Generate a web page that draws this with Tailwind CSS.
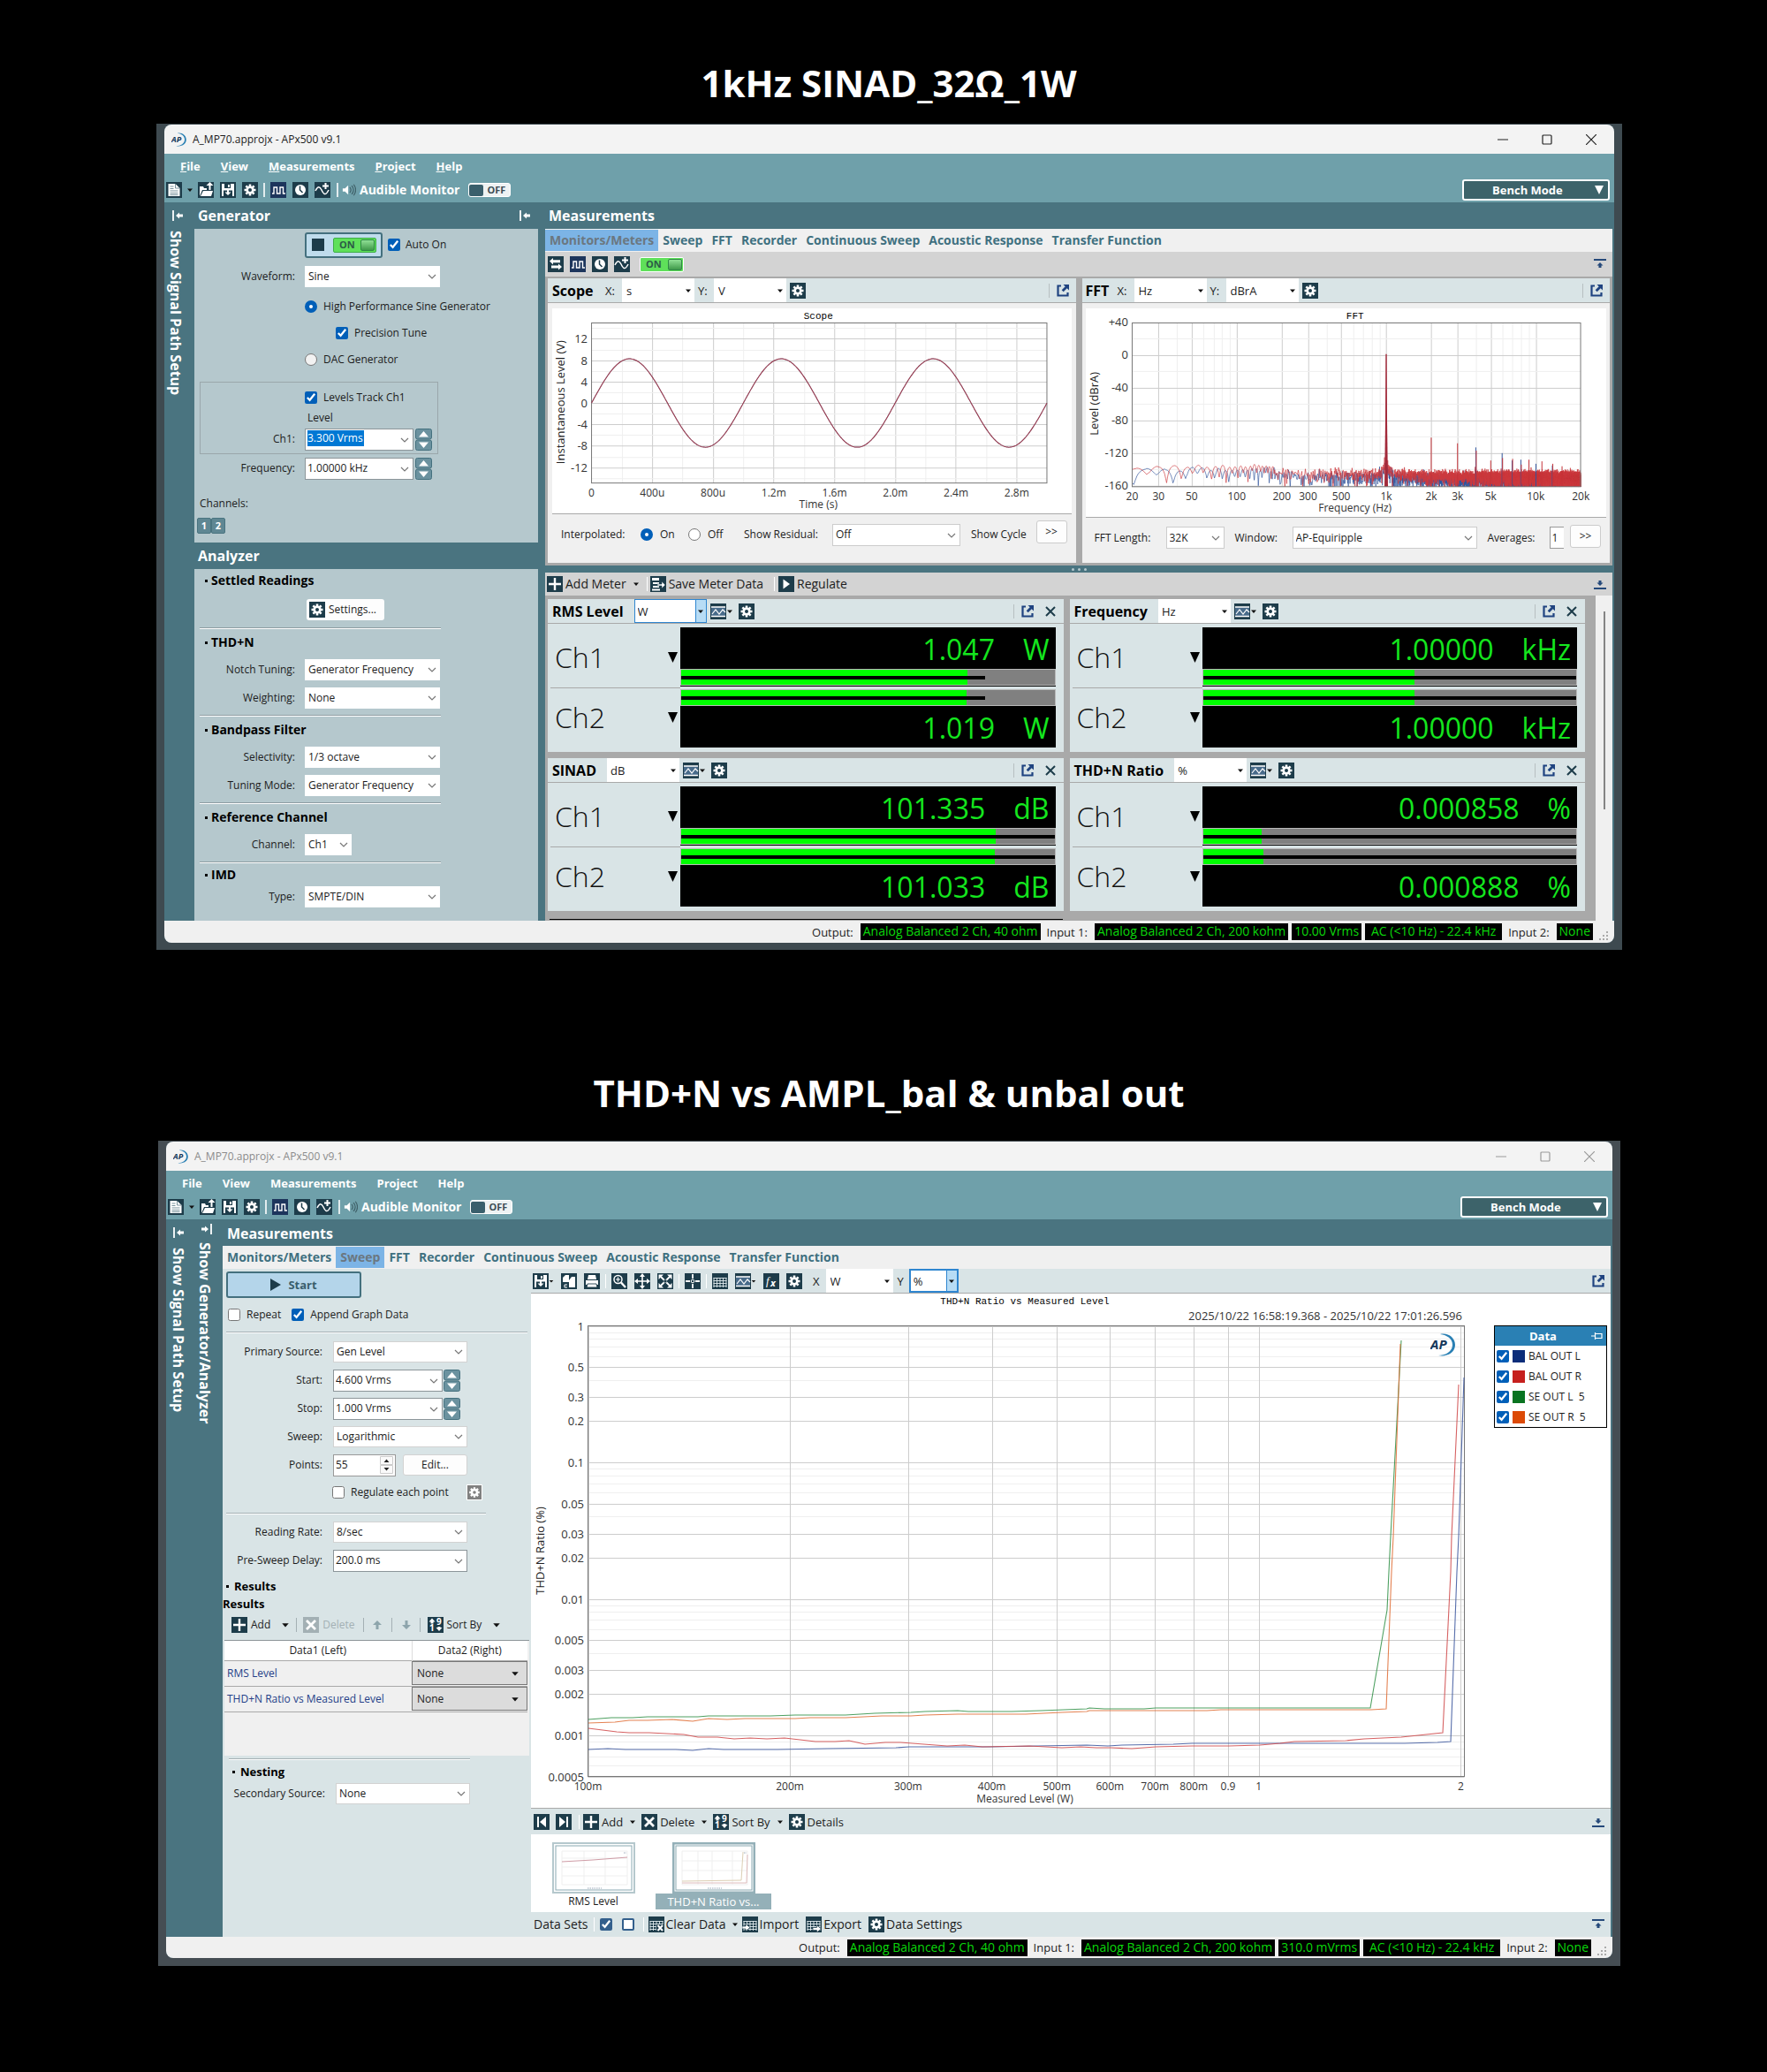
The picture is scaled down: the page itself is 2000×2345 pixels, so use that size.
<!DOCTYPE html>
<html lang="en">
  <head>
    <meta charset="UTF-8" />
    <meta name="viewport" content="width=device-width, initial-scale=1" />
    <title>APx500 - MP70 measurements</title>
    <script src="https://cdn.jsdelivr.net/npm/@tailwindcss/browser@4"></script>
  </head>

  <body class="bg-black font-['Open_Sans','Noto_Sans',sans-serif] text-[12px] leading-4 text-[#1c1c1c] [&_svg]:block [&_svg]:shrink-0 [&_select]:appearance-none [&_select]:outline-none [&_select]:w-full [&_select]:h-full [&_input]:outline-none">

    <!-- icon set -->
    <svg hidden width="0" height="0" aria-hidden="true">
      <symbol id="chev" viewBox="0 0 10 10"><path d="M1 3l4 4 4-4" fill="none" stroke="#777" stroke-width="1.2" /></symbol>
      <symbol id="tri" viewBox="0 0 8 8"><path d="M1 2.500h6L4 6z" fill="#111" /></symbol>
      <symbol id="ap" viewBox="0 0 30 30">
        <text x="0" y="20" font-size="15" font-weight="700" font-style="italic" fill="#14375a">AP</text>
        <path d="M11 3c9-2 17 4 17 12s-8 14-19 12c9 0 16-5 16-12S19 4 11 3z" fill="#2a80b4" />
      </symbol>
      <symbol id="gear" viewBox="0 0 18 18">
        <rect width="18" height="18" fill="currentColor" />
        <g stroke="#fff" stroke-width="2.600"><path d="M9 2.500v13M2.500 9h13M4.400 4.400l9.200 9.200M13.600 4.400l-9.200 9.200" /></g>
        <circle cx="9" cy="9" r="4.600" fill="#fff" /><circle cx="9" cy="9" r="2" fill="currentColor" />
      </symbol>
      <symbol id="new" viewBox="0 0 18 18">
        <rect width="18" height="18" fill="#1d3c4a" /><path d="M2.500 2h8l5 5v9h-13z" fill="#fff" />
        <path d="M10.500 2v5h5M4.500 5h4M4.500 7.500h4M4.500 10h9M4.500 12.500h9M4.500 14.500h9" stroke="#6a8791" fill="none" stroke-width=".9" />
      </symbol>
      <symbol id="open" viewBox="0 0 18 18">
        <rect width="18" height="18" fill="#1d3c4a" /><path d="M2 16V5h4l1 2h3v2H5z" fill="#fff" /><path d="M3 16l3-6h11l-2 6z" fill="#fff" />
        <path d="M12.500 9V4h-3l4-4 4 4h-3v5z" fill="#fff" />
      </symbol>
      <symbol id="save" viewBox="0 0 18 18">
        <rect width="18" height="18" fill="#1d3c4a" /><path d="M2 2h14v14H2z" fill="#fff" /><path d="M5 2h7v5H5z" fill="#1d3c4a" /><path d="M9 3h2v3H9z" fill="#fff" />
        <path d="M4 9.500h10V16H4z" fill="#1d3c4a" /><path d="M8 8.500h2v3h2.500L9 15l-3.500-3.500H8z" fill="#fff" />
      </symbol>
      <symbol id="wave" viewBox="0 0 18 18"><rect width="18" height="18" fill="#1d355c" /><path d="M2 13h2V6h3.500v7H11V6h3.500v7H17" fill="none" stroke="#fff" stroke-width="1.400" /></symbol>
      <symbol id="clock" viewBox="0 0 18 18"><rect width="18" height="18" fill="#1d3c4a" /><circle cx="9" cy="9" r="6" fill="#fff" /><path d="M8.500 4.500V9l3 3" fill="none" stroke="#1d3c4a" stroke-width="1.500" /></symbol>
      <symbol id="sine" viewBox="0 0 18 18"><rect width="18" height="18" fill="#1d3c4a" /><path d="M1 10c3-6 5-5 7-1s4 8 8 0" fill="none" stroke="#fff" stroke-width="1.500" /><path d="M12.500 1v7M9 4.500h7" stroke="#fff" stroke-width="2" /></symbol>
      <symbol id="speaker" viewBox="0 0 18 18"><path d="M1 7h3l4-4v12l-4-4H1z" fill="#fff" /><path d="M10 5.500q3 3.500 0 7M12.500 3.500q4.500 5.500 0 11M15 2q5 7 0 14" fill="none" stroke="#3f6068" stroke-width="1.300" /></symbol>
      <symbol id="collapse" viewBox="0 0 14 14"><path d="M2 1v12" stroke="#fff" stroke-width="1.800" /><path d="M5 7l4-3.500v2h4v3H9v2z" fill="#fff" /></symbol>
      <symbol id="swap" viewBox="0 0 18 18"><rect width="18" height="18" fill="#1d3c4a" /><path d="M2 5.500L6 2v2.200h8v3H6v2.300zM16 12l-4 3.500V13.500H4v-3h8V8.500z" fill="#fff" /></symbol>
      <symbol id="popout" viewBox="0 0 16 16"><path d="M6 2.500H2.500v11h11V10" fill="none" stroke="#1f4380" stroke-width="2.200" /><path d="M8.500 1H15v6.500l-2.300-2.300-4 4-2-2 4-4z" fill="#1f4380" /></symbol>
      <symbol id="close" viewBox="0 0 14 14"><path d="M2 2l10 10M12 2L2 12" stroke="#1d3c4a" stroke-width="2" /></symbol>
      <symbol id="trace" viewBox="0 0 18 18"><rect width="18" height="18" fill="#1d3c4a" /><path d="M1 4h16v11H1z" fill="#486b8a" /><path d="M1 4h16M1 14.500h16" stroke="#fff" stroke-width="1.400" /><path d="M2 12l4-5 4 5 4-5 3 3" fill="none" stroke="#fff" stroke-width="1.200" /></symbol>
      <symbol id="plus" viewBox="0 0 18 18"><rect width="18" height="18" fill="#1d3c4a" /><path d="M9 2v14M2 9h14" stroke="#fff" stroke-width="2.400" /></symbol>
      <symbol id="del" viewBox="0 0 18 18"><rect width="18" height="18" fill="currentColor" /><path d="M4 4l10 10M14 4L4 14" stroke="#fff" stroke-width="2.800" /></symbol>
      <symbol id="savedata" viewBox="0 0 18 18"><rect width="18" height="18" fill="#1d3c4a" /><path d="M2 2h8v3H2zM3 7h7v2H3zM3 11h7v2H3zM2 14.500h9v2H2z" fill="#fff" /><path d="M8 9h5V6l4 4-4 4v-3H8z" fill="#fff" stroke="#1d3c4a" stroke-width=".6" /></symbol>
      <symbol id="play" viewBox="0 0 18 18"><rect width="18" height="18" fill="#1d3c4a" /><path d="M5.500 3.500L13 9l-7.500 5.500z" fill="#fff" /></symbol>
      <symbol id="up" viewBox="0 0 16 16"><path d="M1 3h14" stroke="#25497a" stroke-width="2" /><path d="M8 6l3.500 3.500H9.500V12h-3V9.500h-2z" fill="#25497a" /></symbol>
      <symbol id="down" viewBox="0 0 16 16"><path d="M1 13h14" stroke="#25497a" stroke-width="2" /><path d="M8 10l3.500-3.500H9.500V4h-3v2.500h-2z" fill="#25497a" /></symbol>
      <symbol id="copy" viewBox="0 0 18 18"><rect width="18" height="18" fill="#1d3c4a" /><path d="M2 5l3-3h4v8H2z" fill="#fff" /><path d="M9 8l3-4h4v12H9z" fill="#fff" /><path d="M7 13H4v3h3" fill="none" stroke="#fff" /></symbol>
      <symbol id="print" viewBox="0 0 18 18"><rect width="18" height="18" fill="#1d3c4a" /><path d="M5 2h8l1 5H4z" fill="#fff" /><path d="M2 8h14v5H2z" fill="#fff" /><path d="M4 12h10l1 4H3z" fill="#fff" stroke="#1d3c4a" stroke-width=".9" /></symbol>
      <symbol id="zoom" viewBox="0 0 18 18"><rect width="18" height="18" fill="#1d3c4a" /><circle cx="7.500" cy="7" r="4.500" fill="none" stroke="#fff" stroke-width="1.500" /><path d="M5 7h5M7.500 4.500v5" stroke="#fff" stroke-width="1.200" /><path d="M11 10.500l5 5.500" stroke="#fff" stroke-width="2.400" /></symbol>
      <symbol id="move" viewBox="0 0 18 18"><rect width="18" height="18" fill="#1d3c4a" /><path d="M9 3v12M3 9h12" stroke="#fff" stroke-width="1.600" /><path d="M9 0l3 4H6zM9 18l3-4H6zM0 9l4-3v6zM18 9l-4-3v6z" fill="#fff" /></symbol>
      <symbol id="expand" viewBox="0 0 18 18"><rect width="18" height="18" fill="#1d3c4a" /><path d="M4 4l10 10M14 4L4 14" stroke="#fff" stroke-width="1.800" /><path d="M1.500 1.500h5.500l-5.500 5.500zM16.500 1.500H11l5.500 5.500zM1.500 16.500h5.500L1.500 11zM16.500 16.500H11l5.500-5.500z" fill="#fff" /><path d="M7.500 7.500h3v3h-3z" fill="#1d3c4a" /></symbol>
      <symbol id="cross" viewBox="0 0 18 18"><rect width="18" height="18" fill="#1d3c4a" /><path d="M9 1v5M9 12v5M1 9h5M12 9h5" stroke="#fff" stroke-width="1.800" /><circle cx="9" cy="9" r="1.800" fill="none" stroke="#fff" /></symbol>
      <symbol id="grid" viewBox="0 0 18 18"><rect width="18" height="18" fill="#1d3c4a" /><path d="M1.500 5.500h15M1.500 8.500h15M1.500 11.500h15M1.500 14.500h15M2 5v11M5.500 5v11M9 5v11M12.500 5v11M16 5v11" stroke="#dfe9ec" stroke-width=".9" /></symbol>
      <symbol id="fx" viewBox="0 0 18 18"><rect width="18" height="18" fill="#1d3c4a" /><text x="3" y="13" font-size="13" font-style="italic" fill="#fff" font-family="Liberation Serif">f</text><text x="8" y="15" font-size="11" font-weight="700" font-style="italic" fill="#fff">x</text></symbol>
      <symbol id="first" viewBox="0 0 18 18"><rect width="18" height="18" fill="#1d3c4a" /><path d="M5 3v12" stroke="#fff" stroke-width="2" /><path d="M14 3v12L7 9z" fill="#fff" /></symbol>
      <symbol id="last" viewBox="0 0 18 18"><rect width="18" height="18" fill="#1d3c4a" /><path d="M13 3v12" stroke="#fff" stroke-width="2" /><path d="M4 3v12l7-6z" fill="#fff" /></symbol>
      <symbol id="sort" viewBox="0 0 18 18"><rect width="18" height="18" fill="#1d3c4a" /><text x="10" y="9" font-size="10" font-weight="700" fill="#fff">9</text><text x="2" y="16" font-size="10" font-weight="700" fill="#fff">1</text><path d="M5 1.500l3.500 4h-2v2h-3v-2h-2zM13 16l-3.500-4h2v-1h3v1h2z" fill="#fff" /></symbol>
      <symbol id="cleardata" viewBox="0 0 18 18"><use href="#grid" /><path d="M9 9h9v9H9z" fill="#1d3c4a" /><path d="M10.500 10l5.500 6M16 10l-5.500 6" stroke="#fff" stroke-width="2" /></symbol>
      <symbol id="import" viewBox="0 0 18 18"><use href="#grid" /><path d="M0 11h4V8.500l5 4-5 4V14H0z" fill="#fff" stroke="#1d3c4a" stroke-width=".7" /></symbol>
      <symbol id="export" viewBox="0 0 18 18"><use href="#grid" /><path d="M8 12.500h4.500V10l5 4-5 4v-2.500H8z" fill="#fff" stroke="#1d3c4a" stroke-width=".7" /></symbol>
      <symbol id="spin" viewBox="0 0 19 25">
        <rect x=".5" y=".5" width="18" height="11.500" rx="2" fill="#6b929f" stroke="#44707e" /><path d="M4 9.500h11l-5.500-6.500z" fill="#fff" />
        <rect x=".5" y="13" width="18" height="11.500" rx="2" fill="#6b929f" stroke="#44707e" /><path d="M4 15.500h11l-5.500 6.500z" fill="#fff" />
      </symbol>
      <symbol id="grip" viewBox="0 0 12 12"><path d="M9 1h2v2H9zM9 5h2v2H9zM9 9h2v2H9zM5 5h2v2H5zM5 9h2v2H5zM1 9h2v2H1z" fill="#aaa" /></symbol>
      <symbol id="arrowup" viewBox="0 0 12 12"><path d="M6 1l5 5H7.500v5h-3V6H1z" fill="#8ea5ac" /></symbol>
      <symbol id="arrowdown" viewBox="0 0 12 12"><path d="M6 11l5-5H7.500V1h-3v5H1z" fill="#8ea5ac" /></symbol>
    </svg>

    <div class="pt-[66px] pb-[120px]">
      <h1 class="text-center text-[42px] leading-[56px] font-bold text-white pl-3">1kHz SINAD_32Ω_1W</h1>

      <!-- ============ bench window: monitors / meters ============ -->
      <section class="mt-[18px] ml-[177px] mr-[164px] bg-[#3e4a50] pt-px px-[9px] pb-2">
        <div class="rounded-lg overflow-hidden bg-[#4a7480]">
          <header class="h-[33px] flex items-center bg-[#f3f3f3] pl-2 pr-5">
            <svg class="size-[18px]"><use href="#ap" /></svg>
            <span class="pl-[6px]">A_MP70.approjx - APx500 v9.1</span>
            <div class="ml-auto flex items-center gap-[38px] text-[#222]">
              <button aria-label="Minimize"><svg width="12" height="12"><path d="M0 6h12" stroke="currentColor" stroke-width="1.200" /></svg></button>
              <button aria-label="Maximize"><svg width="12" height="12"><rect x="1" y="1" width="10" height="10" rx="1" fill="none" stroke="currentColor" stroke-width="1.200" /></svg></button>
              <button aria-label="Close"><svg width="12" height="12"><path d="M0 0l12 12M12 0L0 12" stroke="currentColor" stroke-width="1.200" /></svg></button>
            </div>
          </header>
          <div class="bg-[#6fa0aa] h-[55px]">
            <nav class="h-7 flex items-center gap-[23px] pl-[18px] text-[13px] font-bold text-white">
              <a href="#"><u>F</u>ile</a><a href="#"><u>V</u>iew</a><a href="#"><u>M</u>easurements</a><a href="#"><u>P</u>roject</a><a href="#"><u>H</u>elp</a>
            </nav>
            <div class="h-[26px] flex items-center pl-[2px] pr-[5px]">
              <button aria-label="New"><svg class="size-[18px]"><use href="#new" /></svg></button>
              <svg class="size-2 mx-[5px]"><use href="#tri" /></svg>
              <div class="flex gap-[7px]">
                <button aria-label="Open"><svg class="size-[18px]"><use href="#open" /></svg></button>
                <button aria-label="Save"><svg class="size-[18px]"><use href="#save" /></svg></button>
                <button aria-label="Settings" class="text-[#1d3c4a]"><svg class="size-[18px]"><use href="#gear" /></svg></button>
              </div>
              <span class="w-[2px] h-4 bg-white/80 mx-[6px]"></span>
              <div class="flex gap-[7px]">
                <button aria-label="Signal"><svg class="size-[18px]"><use href="#wave" /></svg></button>
                <button aria-label="Clock"><svg class="size-[18px]"><use href="#clock" /></svg></button>
                <button aria-label="Trigger"><svg class="size-[18px]"><use href="#sine" /></svg></button>
              </div>
              <span class="w-[2px] h-4 bg-white/80 ml-[7px] mr-1"></span>
              <svg class="size-4"><use href="#speaker" /></svg>
              <span class="pl-1 text-[14px] font-bold text-white">Audible Monitor</span>
              <button class="ml-[10px] w-12 h-4 rounded-[3px] bg-[#eef2f3] border border-white flex items-center gap-1 text-[11px] font-bold text-[#3b4d55]"><span class="w-4 h-[13px] rounded-[2px] bg-[#3a5f6c]"></span>OFF</button>
              <button class="ml-auto w-[167px] h-6 flex items-center justify-between rounded-[3px] border-2 border-white bg-[#3d636a] pl-8 pr-1 text-[13px] font-bold text-white">
                Bench Mode<svg width="12" height="12"><path d="M1 1h10L6 11z" fill="#fff" /></svg>
              </button>
            </div>
          </div>

          <div class="flex">
            <aside class="w-[34px] shrink-0 flex flex-col items-center pt-2 pr-2">
              <svg class="size-[14px] ml-1"><use href="#collapse" /></svg>
              <span class="[writing-mode:vertical-rl] mt-[10px] text-[16px] leading-5 font-bold text-white whitespace-nowrap">Show Signal Path Setup</span>
            </aside>

            <!-- generator / analyzer -->
            <div class="w-[389px] shrink-0">
              <div class="h-[30px] flex items-center justify-between pl-1 pr-2 text-[16px] font-bold text-white">Generator<svg class="size-[14px]"><use href="#collapse" /></svg></div>
              <form class="bg-[#b5c8cd] pb-[10px] [&_label]:whitespace-nowrap">
                <div class="h-9 flex items-center pl-[125px] gap-[6px]">
                  <button type="button" class="w-[88px] h-[29px] rounded-[3px] border-2 border-[#44707e] bg-[#bfdcec] flex items-center pl-[6px] gap-[10px]">
                    <span class="size-[14px] bg-[#1d3c4a]"></span>
                    <span class="w-[49px] h-[17px] rounded-[2px] bg-[#5fe05a] border border-[#3fae48] flex items-center justify-between pl-[6px] pr-px text-[11px] font-bold text-[#2c5b47]">ON<span class="w-4 h-[13px] rounded-[2px] border border-[#2f8a45] bg-linear-to-b from-[#8fe095] to-[#3f9a4a]"></span></span>
                  </button>
                  <label class="flex items-center gap-[6px]"><input type="checkbox" checked class="size-[14px] accent-[#005fb8]" />Auto On</label>
                </div>
                <div class="h-9 flex items-center">
                  <label for="wf" class="w-[125px] pr-[11px] text-right">Waveform:</label>
                  <div class="relative w-[153px] h-6 bg-white"><select id="wf" class="pl-1"><option>Sine</option></select><svg class="absolute right-1 top-[7px] size-[10px] pointer-events-none"><use href="#chev" /></svg></div>
                </div>
                <div class="h-8 flex items-center pl-[125px]"><label class="flex items-center gap-[7px]"><input type="radio" name="gen" checked class="appearance-none size-[14px] rounded-full border border-[#777] bg-white checked:border-[5px] checked:border-[#005fb8]" />High Performance Sine Generator</label></div>
                <div class="h-7 flex items-center pl-[160px]"><label class="flex items-center gap-[7px]"><input type="checkbox" checked class="size-[14px] accent-[#005fb8]" />Precision Tune</label></div>
                <div class="h-8 flex items-center pl-[125px]"><label class="flex items-center gap-[7px]"><input type="radio" name="gen" class="appearance-none size-[14px] rounded-full border border-[#777] bg-[#f2f2f2]" />DAC Generator</label></div>
                <fieldset class="mt-[9px] ml-[6px] w-[270px] border border-[#9aa7ab] pt-[2px]">
                  <div class="h-[30px] flex items-center pl-[118px]"><label class="flex items-center gap-[7px]"><input type="checkbox" checked class="size-[14px] accent-[#005fb8]" />Levels Track Ch1</label></div>
                  <div class="h-4 pl-[121px]">Level</div>
                  <div class="h-8 flex items-center">
                    <label for="ch1" class="w-[118px] pr-[11px] text-right">Ch1:</label>
                    <div class="relative w-[123px] h-[25px] bg-white border border-[#8c9599] pl-[2px] pt-px"><input id="ch1" type="text" value="3.300 Vrms" class="w-[64px] h-[18px] bg-[#0078d4] text-white" /><svg class="absolute right-1 top-[7px] size-[10px] pointer-events-none"><use href="#chev" /></svg></div>
                    <svg class="ml-[2px] w-[19px] h-[25px]"><use href="#spin" /></svg>
                  </div>
                </fieldset>
                <div class="h-8 flex items-center">
                  <label for="fq" class="w-[125px] pr-[11px] text-right">Frequency:</label>
                  <div class="relative w-[123px] h-[25px] bg-white border border-[#8c9599]"><input id="fq" type="text" value="1.00000 kHz" class="w-full h-[22px] pl-[2px]" /><svg class="absolute right-1 top-[7px] size-[10px] pointer-events-none"><use href="#chev" /></svg></div>
                  <svg class="ml-[2px] w-[19px] h-[25px]"><use href="#spin" /></svg>
                </div>
                <div class="mt-2 h-8 flex items-center pl-[6px]">Channels:</div>
                <div class="flex pl-[3px] text-[11px] font-bold text-white"><button type="button" class="w-4 h-[18px] rounded-[2px] bg-[#5f8793] border border-[#4a7480] leading-4">1</button><button type="button" class="w-4 h-[18px] rounded-[2px] bg-[#5f8793] border border-[#4a7480] leading-4">2</button></div>
              </form>

              <div class="h-[30px] flex items-center pl-1 text-[16px] font-bold text-white">Analyzer</div>
              <form class="bg-[#b5c8cd] h-[398px] [&_h3]:pl-3 [&_h3]:text-[14px] [&_h3]:font-bold [&_h3]:text-black [&_h3]:flex [&_h3]:items-center [&_label]:whitespace-nowrap [&_hr]:ml-[6px] [&_hr]:w-[273px] [&_hr]:h-[2px] [&_hr]:border-t [&_hr]:border-[#8f9da2] [&_hr]:bg-white">
                <h3 class="h-[26px] gap-1"><span class="size-[3px] bg-black"></span>Settled Readings</h3>
                <div class="h-10 flex items-center pl-[127px]"><button type="button" class="w-[88px] h-6 rounded-[3px] bg-[#fdfdfd] flex items-center gap-1 pl-[3px] text-[#1c1c1c]"><svg class="size-[18px] text-[#1d3c4a]"><use href="#gear" /></svg>Settings...</button></div>
                <hr />
                <h3 class="h-[30px] gap-1"><span class="size-[3px] bg-black"></span>THD+N</h3>
                <div class="h-8 flex items-center"><label for="nt" class="w-[125px] pr-[11px] text-right">Notch Tuning:</label>
                  <div class="relative w-[153px] h-6 bg-white"><select id="nt" class="pl-1"><option>Generator Frequency</option></select><svg class="absolute right-1 top-[7px] size-[10px] pointer-events-none"><use href="#chev" /></svg></div></div>
                <div class="h-8 mb-[3px] flex items-center"><label for="wt" class="w-[125px] pr-[11px] text-right">Weighting:</label>
                  <div class="relative w-[153px] h-6 bg-white"><select id="wt" class="pl-1"><option>None</option></select><svg class="absolute right-1 top-[7px] size-[10px] pointer-events-none"><use href="#chev" /></svg></div></div>
                <hr />
                <h3 class="h-[30px] gap-1"><span class="size-[3px] bg-black"></span>Bandpass Filter</h3>
                <div class="h-8 flex items-center"><label for="sl" class="w-[125px] pr-[11px] text-right">Selectivity:</label>
                  <div class="relative w-[153px] h-6 bg-white"><select id="sl" class="pl-1"><option>1/3 octave</option></select><svg class="absolute right-1 top-[7px] size-[10px] pointer-events-none"><use href="#chev" /></svg></div></div>
                <div class="h-8 mb-[3px] flex items-center"><label for="tm" class="w-[125px] pr-[11px] text-right">Tuning Mode:</label>
                  <div class="relative w-[153px] h-6 bg-white"><select id="tm" class="pl-1"><option>Generator Frequency</option></select><svg class="absolute right-1 top-[7px] size-[10px] pointer-events-none"><use href="#chev" /></svg></div></div>
                <hr />
                <h3 class="h-[30px] gap-1"><span class="size-[3px] bg-black"></span>Reference Channel</h3>
                <div class="h-8 mb-[3px] flex items-center"><label for="rc" class="w-[125px] pr-[11px] text-right">Channel:</label>
                  <div class="relative w-[53px] h-6 bg-white"><select id="rc" class="pl-1"><option>Ch1</option></select><svg class="absolute right-1 top-[7px] size-[10px] pointer-events-none"><use href="#chev" /></svg></div></div>
                <hr />
                <h3 class="h-[26px] gap-1"><span class="size-[3px] bg-black"></span>IMD</h3>
                <div class="h-6 flex items-center"><label for="ty" class="w-[125px] pr-[11px] text-right">Type:</label>
                  <div class="relative w-[153px] h-6 bg-white"><select id="ty" class="pl-1"><option>SMPTE/DIN</option></select><svg class="absolute right-1 top-[7px] size-[10px] pointer-events-none"><use href="#chev" /></svg></div></div>
              </form>
            </div>

            <!-- measurements -->
            <main class="flex-1 min-w-0 flex flex-col pl-2 pr-[2px]">
              <h2 class="h-[30px] flex items-center pl-1 text-[16px] font-bold text-white">Measurements</h2>
              <nav class="h-[26px] flex items-center bg-[#f0f0f0] text-[14px] font-bold text-[#3f7080] [&_a]:h-6 [&_a]:px-[5px] [&_a]:leading-6 [&_a]:whitespace-nowrap">
                <a href="#" class="bg-[#7cb4e6] text-[#6b7780]">Monitors/Meters</a><a href="#">Sweep</a><a href="#">FFT</a><a href="#">Recorder</a><a href="#">Continuous Sweep</a><a href="#">Acoustic Response</a><a href="#">Transfer Function</a>
              </nav>
              <div class="h-7 flex items-center gap-[7px] bg-[#d3d3d3] px-[3px] pr-[6px]">
                <button aria-label="Swap"><svg class="size-[18px]"><use href="#swap" /></svg></button>
                <button aria-label="Signal"><svg class="size-[18px]"><use href="#wave" /></svg></button>
                <button aria-label="Clock"><svg class="size-[18px]"><use href="#clock" /></svg></button>
                <button aria-label="Trigger"><svg class="size-[18px]"><use href="#sine" /></svg></button>
                <button class="ml-1 w-[50px] h-[17px] rounded-[2px] bg-[#5fe05a] border border-white flex items-center justify-between pl-[6px] pr-px text-[11px] font-bold text-[#2c5b47]">ON<span class="w-4 h-[13px] rounded-[2px] border border-[#2f8a45] bg-linear-to-b from-[#8fe095] to-[#3f9a4a]"></span></button>
                <svg class="ml-auto size-4"><use href="#up" /></svg>
              </div>

              <div class="bg-[#a9a9a9] grid grid-cols-2 gap-[7px] pt-[2px] px-[3px] pb-[3px]">
                <!-- scope -->
                <div class="bg-[#f0f0f0] h-[322px]">
                  <div class="h-7 flex items-center bg-[#d9e4e6] border-b border-[#a9a9a9] pl-[5px] pr-[7px] text-[13px]">
                    <b class="w-[60px] text-[16px] text-black">Scope</b>
                    <label for="sx" class="w-[19px]">X:</label>
                    <div class="relative w-[82px] h-[27px] bg-white"><select id="sx" class="pl-[5px]"><option>s</option></select><svg class="absolute right-[3px] top-[10px] size-2 pointer-events-none"><use href="#tri" /></svg></div>
                    <label for="sy" class="w-[22px] pl-1">Y:</label>
                    <div class="relative w-[82px] h-[27px] bg-white"><select id="sy" class="pl-[5px]"><option>V</option></select><svg class="absolute right-[3px] top-[10px] size-2 pointer-events-none"><use href="#tri" /></svg></div>
                    <svg class="ml-1 size-[18px] text-[#1d3c4a]"><use href="#gear" /></svg>
                    <span class="ml-auto w-px h-4 bg-[#b7bfc1] mr-[7px]"></span><svg class="size-4"><use href="#popout" /></svg>
                  </div>
                  <div class="mx-[5px] mt-[6px] bg-white border-b border-[#a9a9a9]"><svg id="scope" class="w-full h-auto" viewBox="0 0 587 232"></svg></div>
                  <div class="h-[46px] flex items-center pl-[15px] pr-[10px]">
                    <span class="w-[90px]">Interpolated:</span>
                    <label class="flex items-center gap-2 w-[54px]"><input type="radio" name="ip" checked class="appearance-none size-[14px] rounded-full border border-[#777] bg-white checked:border-[5px] checked:border-[#005fb8]" />On</label>
                    <label class="flex items-center gap-2 w-[63px]"><input type="radio" name="ip" class="appearance-none size-[14px] rounded-full border border-[#777] bg-white" />Off</label>
                    <label for="sr" class="w-[100px] whitespace-nowrap">Show Residual:</label>
                    <div class="relative w-[145px] h-[25px] bg-white border border-[#ccc]"><select id="sr" class="pl-[3px]"><option>Off</option></select><svg class="absolute right-1 top-[7px] size-[10px] pointer-events-none"><use href="#chev" /></svg></div>
                    <span class="ml-3 whitespace-nowrap">Show Cycle</span>
                    <button class="ml-auto w-[35px] h-[26px] mb-[6px] rounded-[3px] bg-[#fdfdfd] border border-[#ccc]">&gt;&gt;</button>
                  </div>
                </div>
                <!-- fft -->
                <div class="bg-[#f0f0f0] h-[322px]">
                  <div class="h-7 flex items-center bg-[#d9e4e6] border-b border-[#a9a9a9] pl-1 pr-[7px] text-[13px]">
                    <b class="w-9 text-[16px] text-black">FFT</b>
                    <label for="fx1" class="w-[19px]">X:</label>
                    <div class="relative w-[82px] h-[27px] bg-white"><select id="fx1" class="pl-[5px]"><option>Hz</option></select><svg class="absolute right-[3px] top-[10px] size-2 pointer-events-none"><use href="#tri" /></svg></div>
                    <label for="fy1" class="w-[22px] pl-1">Y:</label>
                    <div class="relative w-[82px] h-[27px] bg-white"><select id="fy1" class="pl-[5px]"><option>dBrA</option></select><svg class="absolute right-[3px] top-[10px] size-2 pointer-events-none"><use href="#tri" /></svg></div>
                    <svg class="ml-1 size-[18px] text-[#1d3c4a]"><use href="#gear" /></svg>
                    <span class="ml-auto w-px h-4 bg-[#b7bfc1] mr-[7px]"></span><svg class="size-4"><use href="#popout" /></svg>
                  </div>
                  <div class="mx-1 mt-[6px] bg-white border-b border-[#a9a9a9]"><svg id="fft" class="w-full h-auto" viewBox="0 0 590 236"></svg></div>
                  <div class="h-[46px] flex items-center pl-[14px] pr-[10px]">
                    <label for="fl" class="w-[81px] whitespace-nowrap">FFT Length:</label>
                    <div class="relative w-[66px] h-[25px] bg-white border border-[#ccc]"><select id="fl" class="pl-[3px]"><option>32K</option></select><svg class="absolute right-1 top-[7px] size-[10px] pointer-events-none"><use href="#chev" /></svg></div>
                    <label for="wn" class="ml-3 w-[65px]">Window:</label>
                    <div class="relative w-[209px] h-[25px] bg-white border border-[#ccc]"><select id="wn" class="pl-[3px]"><option>AP-Equiripple</option></select><svg class="absolute right-1 top-[7px] size-[10px] pointer-events-none"><use href="#chev" /></svg></div>
                    <label for="av" class="ml-3 w-[70px]">Averages:</label>
                    <input id="av" type="text" value="1" class="w-4 h-[25px] bg-white border border-r-0 border-[#999] pl-[2px]" />
                    <button class="ml-auto w-[35px] h-[26px] mb-1 rounded-[3px] bg-[#fdfdfd] border border-[#ccc]">&gt;&gt;</button>
                  </div>
                </div>
              </div>

              <div class="h-2 flex items-center justify-center gap-1"><i class="size-[3px] rounded-full bg-[#b5c8cd]"></i><i class="size-[3px] rounded-full bg-[#b5c8cd]"></i><i class="size-[3px] rounded-full bg-[#b5c8cd]"></i></div>

              <div class="h-[26px] flex items-center bg-[#d3d3d3] pl-[2px] pr-[6px] text-[14px]">
                <button class="flex items-center gap-[3px]"><svg class="size-[18px]"><use href="#plus" /></svg>Add Meter<svg class="ml-1 size-2"><use href="#tri" /></svg></button>
                <span class="ml-2 mr-[3px] w-px h-4 bg-white"></span>
                <button class="flex items-center gap-[3px]"><svg class="size-[18px]"><use href="#savedata" /></svg>Save Meter Data</button>
                <span class="mx-3 mr-1 w-px h-4 bg-white"></span>
                <button class="flex items-center gap-[3px]"><svg class="size-[18px]"><use href="#play" /></svg>Regulate</button>
                <svg class="ml-auto size-4"><use href="#down" /></svg>
              </div>
              <div class="flex-1 flex bg-[#a9a9a9]">
                <div class="flex-1 min-w-0 flex flex-col justify-between">
                  <div id="meters" class="grid grid-cols-2 gap-[7px] pt-1 pl-[3px] pr-3"></div>
                  <div class="h-px mb-px ml-[5px] w-[581px] bg-black"></div>
                </div>
                <div class="w-[19px] bg-[#f0f0f0] flex justify-center pt-[18px]"><span class="w-[2px] h-[224px] bg-[#858585]"></span></div>
              </div>
            </main>
          </div>

          <footer class="h-[25px] flex items-center justify-end bg-[#f0f0f0] pr-[6px] text-[13px] [&_output]:bg-black [&_output]:text-center [&_output]:text-[#0bd80b] [&_output]:h-[19px] [&_output]:leading-[18px] [&_output]:px-[3px] [&_output]:text-[14px] whitespace-nowrap">
            <span class="pr-2">Output:</span><output>Analog Balanced 2 Ch, 40 ohm</output>
            <span class="pl-[7px] pr-2">Input 1:</span><output>Analog Balanced 2 Ch, 200 kohm</output><output class="ml-1">10.00 Vrms</output><output class="ml-1 min-w-[155px]">AC (&lt;10 Hz) - 22.4 kHz</output>
            <span class="pl-[7px] pr-2">Input 2:</span><output>None</output><svg class="ml-[6px] mt-2 size-3"><use href="#grip" /></svg>
          </footer>
        </div>
      </section>

      <h1 class="mt-[134px] text-center text-[42px] leading-[56px] font-bold text-white pl-3">THD+N vs AMPL_bal &amp; unbal out</h1>

      <!-- ============ bench window: sweep ============ -->
      <section class="mt-[26px] ml-[179px] mr-[166px] bg-[#454d53] pt-px px-[9px] pb-[9px]">
        <div class="rounded-lg overflow-hidden bg-[#4a7480]">
          <header class="h-[33px] flex items-center bg-[#f3f3f3] pl-2 pr-5">
            <svg class="size-[18px]"><use href="#ap" /></svg>
            <span class="pl-[6px] text-[#8b8b8b]">A_MP70.approjx - APx500 v9.1</span>
            <div class="ml-auto flex items-center gap-[38px] text-[#9a9a9a]">
              <button aria-label="Minimize"><svg width="12" height="12"><path d="M0 6h12" stroke="currentColor" stroke-width="1.200" /></svg></button>
              <button aria-label="Maximize"><svg width="12" height="12"><rect x="1" y="1" width="10" height="10" rx="1" fill="none" stroke="currentColor" stroke-width="1.200" /></svg></button>
              <button aria-label="Close"><svg width="12" height="12"><path d="M0 0l12 12M12 0L0 12" stroke="currentColor" stroke-width="1.200" /></svg></button>
            </div>
          </header>
          <div class="bg-[#6fa0aa] h-[55px]">
            <nav class="h-7 flex items-center gap-[23px] pl-[18px] text-[13px] font-bold text-white">
              <a href="#">File</a><a href="#">View</a><a href="#">Measurements</a><a href="#">Project</a><a href="#">Help</a>
            </nav>
            <div class="h-[26px] flex items-center pl-[2px] pr-[5px]">
              <button aria-label="New"><svg class="size-[18px]"><use href="#new" /></svg></button>
              <svg class="size-2 mx-[5px]"><use href="#tri" /></svg>
              <div class="flex gap-[7px]">
                <button aria-label="Open"><svg class="size-[18px]"><use href="#open" /></svg></button>
                <button aria-label="Save"><svg class="size-[18px]"><use href="#save" /></svg></button>
                <button aria-label="Settings" class="text-[#1d3c4a]"><svg class="size-[18px]"><use href="#gear" /></svg></button>
              </div>
              <span class="w-[2px] h-4 bg-white/80 mx-[6px]"></span>
              <div class="flex gap-[7px]">
                <button aria-label="Signal"><svg class="size-[18px]"><use href="#wave" /></svg></button>
                <button aria-label="Clock"><svg class="size-[18px]"><use href="#clock" /></svg></button>
                <button aria-label="Trigger"><svg class="size-[18px]"><use href="#sine" /></svg></button>
              </div>
              <span class="w-[2px] h-4 bg-white/80 ml-[7px] mr-1"></span>
              <svg class="size-4"><use href="#speaker" /></svg>
              <span class="pl-1 text-[14px] font-bold text-white">Audible Monitor</span>
              <button class="ml-[10px] w-12 h-4 rounded-[3px] bg-[#eef2f3] border border-white flex items-center gap-1 text-[11px] font-bold text-[#3b4d55]"><span class="w-4 h-[13px] rounded-[2px] bg-[#3a5f6c]"></span>OFF</button>
              <button class="ml-auto w-[167px] h-6 flex items-center justify-between rounded-[3px] border-2 border-white bg-[#3d636a] pl-8 pr-1 text-[13px] font-bold text-white">
                Bench Mode<svg width="12" height="12"><path d="M1 1h10L6 11z" fill="#fff" /></svg>
              </button>
            </div>
          </div>

          <div class="flex">
            <aside class="w-16 shrink-0 flex pl-[3px] gap-2">
              <div class="flex flex-col items-center pt-2">
                <svg class="size-[14px]"><use href="#collapse" /></svg>
                <span class="[writing-mode:vertical-rl] mt-[10px] text-[16px] leading-[22px] font-bold text-white whitespace-nowrap">Show Signal Path Setup</span>
              </div>
              <div class="flex flex-col items-center pt-1">
                <svg class="size-[14px] ml-1 rotate-180"><use href="#collapse" /></svg>
                <span class="[writing-mode:vertical-rl] mt-2 text-[16px] leading-[22px] font-bold text-white whitespace-nowrap">Show Generator/Analyzer</span>
              </div>
            </aside>

            <main class="flex-1 min-w-0 pr-[2px]">
              <h2 class="h-[30px] flex items-center pl-[5px] pt-[2px] text-[16px] font-bold text-white">Measurements</h2>
              <nav class="h-[26px] flex items-center bg-[#f0f0f0] text-[14px] font-bold text-[#3f7080] [&_a]:h-6 [&_a]:px-[5px] [&_a]:leading-6 [&_a]:whitespace-nowrap">
                <a href="#">Monitors/Meters</a><a href="#" class="bg-[#7cb4e6] text-[#6b7780]">Sweep</a><a href="#">FFT</a><a href="#">Recorder</a><a href="#">Continuous Sweep</a><a href="#">Acoustic Response</a><a href="#">Transfer Function</a>
              </nav>
              <div class="flex bg-[#d9e4e6]">
                <!-- sweep settings -->
                <form class="w-[349px] shrink-0 pt-[3px] [&_label]:whitespace-nowrap">
                  <button type="button" class="ml-1 w-[153px] h-[30px] rounded-[3px] border-2 border-[#44707e] bg-[#b4d5ea] flex items-center justify-center gap-2 text-[13px] font-bold text-[#3a5f6c]"><svg width="12" height="14"><path d="M0 0l12 7-12 7z" fill="#1d3c4a" /></svg>Start</button>
                  <div class="h-[38px] flex items-center pl-[6px] gap-3">
                    <label class="flex items-center gap-[7px]"><input type="checkbox" class="size-[14px] accent-[#005fb8]" />Repeat</label>
                    <label class="flex items-center gap-[7px]"><input type="checkbox" checked class="size-[14px] accent-[#005fb8]" />Append Graph Data</label>
                  </div>
                  <hr class="ml-1 w-[341px] h-[2px] border-t border-[#a4b0b4] bg-white" />
                  <div class="h-[5px]"></div>
                  <div class="h-8 flex items-center"><label for="ps" class="w-[125px] pr-3 text-right">Primary Source:</label>
                    <div class="relative w-[152px] h-6 bg-white border border-[#d2d2d2]"><select id="ps" class="pl-[3px]"><option>Gen Level</option></select><svg class="absolute right-1 top-[6px] size-[10px] pointer-events-none"><use href="#chev" /></svg></div></div>
                  <div class="h-8 flex items-center"><label for="st" class="w-[125px] pr-3 text-right">Start:</label>
                    <div class="relative w-[124px] h-[25px] bg-white border border-[#8c9599]"><input id="st" type="text" value="4.600 Vrms" class="w-full h-[22px] pl-[2px]" /><svg class="absolute right-1 top-[7px] size-[10px] pointer-events-none"><use href="#chev" /></svg></div><svg class="ml-px w-[19px] h-[25px]"><use href="#spin" /></svg></div>
                  <div class="h-8 flex items-center"><label for="sp" class="w-[125px] pr-3 text-right">Stop:</label>
                    <div class="relative w-[124px] h-[25px] bg-white border border-[#8c9599]"><input id="sp" type="text" value="1.000 Vrms" class="w-full h-[22px] pl-[2px]" /><svg class="absolute right-1 top-[7px] size-[10px] pointer-events-none"><use href="#chev" /></svg></div><svg class="ml-px w-[19px] h-[25px]"><use href="#spin" /></svg></div>
                  <div class="h-8 flex items-center"><label for="sw" class="w-[125px] pr-3 text-right">Sweep:</label>
                    <div class="relative w-[152px] h-6 bg-white border border-[#d2d2d2]"><select id="sw" class="pl-[3px]"><option>Logarithmic</option></select><svg class="absolute right-1 top-[6px] size-[10px] pointer-events-none"><use href="#chev" /></svg></div></div>
                  <div class="h-8 flex items-center"><label for="pt" class="w-[125px] pr-3 text-right">Points:</label>
                    <div class="w-[71px] h-[25px] flex items-center bg-white border border-[#999]"><input id="pt" type="text" value="55" class="w-[52px] pl-[2px]" />
                      <svg width="15" height="20"><path d="M.5.500h14v9H.500zM.5 10.500h14v9H.500z" fill="#fafafa" stroke="#ccc" /><path d="M4.500 7h6l-3-3.500zM4.500 13h6l-3 3.500z" fill="#222" /></svg></div>
                    <button type="button" class="ml-2 w-[73px] h-6 rounded-[3px] bg-[#fdfdfd] border border-[#d2d2d2]">Edit...</button></div>
                  <div class="h-[30px] flex items-center pl-[124px]"><label class="flex items-center gap-[7px]"><input type="checkbox" class="size-[14px] accent-[#005fb8]" />Regulate each point</label><span class="ml-5 p-px bg-white text-[#808080]"><svg class="size-4"><use href="#gear" /></svg></span></div>
                  <hr class="mt-2 mb-1 ml-1 w-[294px] h-[2px] border-t border-[#a4b0b4] bg-white" />
                  <div class="h-8 flex items-center"><label for="rr" class="w-[125px] pr-3 text-right">Reading Rate:</label>
                    <div class="relative w-[152px] h-6 bg-white border border-[#d2d2d2]"><select id="rr" class="pl-[3px]"><option>8/sec</option></select><svg class="absolute right-1 top-[6px] size-[10px] pointer-events-none"><use href="#chev" /></svg></div></div>
                  <div class="h-8 flex items-center"><label for="pd" class="w-[125px] pr-3 text-right">Pre-Sweep Delay:</label>
                    <div class="relative w-[152px] h-[25px] bg-white border border-[#8c9599]"><input id="pd" type="text" value="200.0 ms" class="w-full h-[22px] pl-[2px]" /><svg class="absolute right-1 top-[7px] size-[10px] pointer-events-none"><use href="#chev" /></svg></div></div>
                  <h3 class="h-[26px] flex items-center gap-[6px] pl-1 text-[13px] font-bold text-black"><span class="size-[3px] bg-black"></span>Results</h3>
                  <h4 class="h-[14px] leading-[14px] text-[13px] font-bold text-black">Results</h4>
                  <div class="h-[34px] flex items-center pl-[10px] text-[12px]">
                    <button type="button" class="flex items-center gap-1"><svg class="size-[18px]"><use href="#plus" /></svg>Add<svg class="ml-2 size-[10px]"><use href="#tri" /></svg></button>
                    <span class="mx-[7px] w-px h-4 bg-[#a4b0b4]"></span>
                    <button type="button" disabled class="flex items-center gap-1 text-[#a3b0b4]"><svg class="size-[18px]"><use href="#del" /></svg>Delete</button>
                    <span class="mx-[9px] w-px h-4 bg-[#a4b0b4]"></span><svg class="size-3"><use href="#arrowup" /></svg>
                    <span class="mx-[10px] w-px h-4 bg-[#a4b0b4]"></span><svg class="size-3"><use href="#arrowdown" /></svg>
                    <span class="mx-[9px] mr-2 w-px h-4 bg-[#a4b0b4]"></span>
                    <button type="button" class="flex items-center gap-1"><svg class="size-[18px]"><use href="#sort" /></svg>Sort By<svg class="ml-2 size-[10px]"><use href="#tri" /></svg></button>
                  </div>
                  <div class="ml-[2px] w-[345px] h-[131px] bg-[#f0f0f0] border-t border-[#8c9599]">
                    <table class="w-[343px] table-fixed border-collapse">
                      <thead><tr class="h-[22px] bg-white"><th class="w-[212px] font-normal border-r border-[#ddd]">Data1 (Left)</th><th class="font-normal">Data2 (Right)</th></tr></thead>
                      <tbody>
                        <tr class="h-[29px] border-y border-[#a9a9a9]"><td class="pl-[3px] text-[#243f88]">RMS Level</td><td class="p-0"><div class="relative h-[27px] bg-[#dcdcdc] border border-[#777]"><select aria-label="RMS Level right" class="pl-[5px]"><option>None</option></select><svg class="absolute right-2 top-2 size-[10px] pointer-events-none"><use href="#tri" /></svg></div></td></tr>
                        <tr class="h-[29px] border-y border-[#a9a9a9]"><td class="pl-[3px] text-[#243f88] whitespace-nowrap">THD+N Ratio vs Measured Level</td><td class="p-0"><div class="relative h-[27px] bg-[#dcdcdc] border border-[#777]"><select aria-label="THD+N right" class="pl-[5px]"><option>None</option></select><svg class="absolute right-2 top-2 size-[10px] pointer-events-none"><use href="#tri" /></svg></div></td></tr>
                      </tbody>
                    </table>
                  </div>
                  <hr class="mt-[3px] ml-[7px] w-[273px] h-[2px] border-t border-[#a4b0b4] bg-white" />
                  <h3 class="h-[26px] flex items-center gap-[6px] pl-[11px] text-[13px] font-bold text-black"><span class="size-[3px] bg-black"></span>Nesting</h3>
                  <div class="h-6 flex items-center"><label for="ss" class="w-[128px] pr-3 text-right">Secondary Source:</label>
                    <div class="relative w-[152px] h-6 bg-white border border-[#d2d2d2]"><select id="ss" class="pl-[3px]"><option>None</option></select><svg class="absolute right-1 top-[6px] size-[10px] pointer-events-none"><use href="#chev" /></svg></div></div>
                </form>

                <!-- graph -->
                <div class="flex-1 min-w-0">
                  <div class="h-7 flex items-center gap-2 border-b border-[#a9a9a9] pl-[2px] pr-[6px] text-[13px]">
                    <button class="flex items-center" aria-label="Save graph"><svg class="size-[18px]"><use href="#save" /></svg><svg class="w-[6px] h-2"><use href="#tri" /></svg></button>
                    <button aria-label="Copy"><svg class="size-[18px]"><use href="#copy" /></svg></button>
                    <button aria-label="Print"><svg class="size-[18px]"><use href="#print" /></svg></button>
                    <span class="w-px h-4 -mx-[2px] bg-white"></span>
                    <button aria-label="Zoom"><svg class="size-[18px]"><use href="#zoom" /></svg></button>
                    <button aria-label="Pan"><svg class="size-[18px]"><use href="#move" /></svg></button>
                    <button aria-label="Fit"><svg class="size-[18px]"><use href="#expand" /></svg></button>
                    <span class="w-px h-4 -mx-[2px] bg-white"></span>
                    <button aria-label="Cursor"><svg class="size-[18px]"><use href="#cross" /></svg></button>
                    <span class="w-px h-4 -mx-[2px] bg-white"></span>
                    <button aria-label="Table"><svg class="size-[18px]"><use href="#grid" /></svg></button>
                    <button class="flex items-center" aria-label="Trace"><svg class="size-[18px]"><use href="#trace" /></svg><svg class="w-[6px] h-2"><use href="#tri" /></svg></button>
                    <button aria-label="Function"><svg class="size-[18px]"><use href="#fx" /></svg></button>
                    <button aria-label="Graph settings" class="text-[#1d3c4a]"><svg class="size-[18px]"><use href="#gear" /></svg></button>
                    <label for="gx" class="pl-1">X</label>
                    <div class="relative w-[76px] h-[27px] -mx-px bg-white"><select id="gx" class="pl-[5px]"><option>W</option></select><svg class="absolute right-[3px] top-[10px] size-2 pointer-events-none"><use href="#tri" /></svg></div>
                    <label for="gy" class="-mx-[2px]">Y</label>
                    <div class="relative w-14 h-[27px] bg-white border-2 border-[#2f86d0]"><select id="gy" class="pl-[3px]"><option>%</option></select><span class="absolute right-0 top-0 h-full w-3 bg-[#b7dcf5] border-l border-[#2f86d0] flex items-center justify-center pointer-events-none"><svg class="size-2"><use href="#tri" /></svg></span></div>
                    <svg class="ml-auto size-4"><use href="#popout" /></svg>
                  </div>
                  <div class="relative bg-white border-b border-[#a9a9a9]">
                    <svg id="sweep" class="w-full h-auto" viewBox="0 0 1222 582"></svg>
                    <div class="absolute top-9 right-1 w-32 border border-black bg-white text-[12px]">
                      <div class="h-[22px] bg-[#2a80b4] flex items-center text-[13px] font-bold text-white"><span class="flex-1 text-center">Data</span><svg class="mr-1" width="13" height="10"><path d="M0 5h4M4.500 1v8M5 2.500h7v5H5" fill="none" stroke="#fff" stroke-width="1.200" /></svg></div>
                      <label class="h-[23px] flex items-center gap-1 pl-[2px]"><input type="checkbox" checked class="size-[14px] accent-[#005fb8]" /><i class="size-[14px] bg-[#0c2d7a]"></i>BAL OUT L</label>
                      <label class="h-[23px] flex items-center gap-1 pl-[2px]"><input type="checkbox" checked class="size-[14px] accent-[#005fb8]" /><i class="size-[14px] bg-[#c6201e]"></i>BAL OUT R</label>
                      <label class="h-[23px] flex items-center gap-1 pl-[2px]"><input type="checkbox" checked class="size-[14px] accent-[#005fb8]" /><i class="size-[14px] bg-[#0a7420]"></i>SE OUT L &nbsp;5</label>
                      <label class="h-[23px] flex items-center gap-1 pl-[2px]"><input type="checkbox" checked class="size-[14px] accent-[#005fb8]" /><i class="size-[14px] bg-[#dc4a06]"></i>SE OUT R &nbsp;5</label>
                    </div>
                  </div>
                  <div class="h-[29px] flex items-center pl-[3px] pr-[6px] text-[13px]">
                    <button aria-label="First"><svg class="size-[18px]"><use href="#first" /></svg></button>
                    <button aria-label="Last" class="ml-[7px]"><svg class="size-[18px]"><use href="#last" /></svg></button>
                    <span class="ml-2 mr-1 w-px h-4 bg-white"></span>
                    <button class="flex items-center gap-[3px]"><svg class="size-[18px]"><use href="#plus" /></svg>Add<svg class="ml-1 size-2"><use href="#tri" /></svg></button>
                    <button class="ml-[6px] flex items-center gap-[3px]"><svg class="size-[18px] text-[#1d3c4a]"><use href="#del" /></svg>Delete<svg class="ml-1 size-2"><use href="#tri" /></svg></button>
                    <button class="ml-[6px] flex items-center gap-[3px]"><svg class="size-[18px]"><use href="#sort" /></svg>Sort By<svg class="ml-1 size-2"><use href="#tri" /></svg></button>
                    <button class="ml-[6px] flex items-center gap-[3px]"><svg class="size-[18px] text-[#1d3c4a]"><use href="#gear" /></svg>Details</button>
                    <svg class="ml-auto size-4"><use href="#down" /></svg>
                  </div>
                  <div class="h-[88px] bg-white flex pt-[9px] pl-[5px] gap-[5px] text-center text-[12px]">
                    <div class="w-[131px]">
                      <svg class="mx-auto" width="94" height="58"><rect x="1" y="1" width="92" height="56" fill="#fff" stroke="#b5c8cd" stroke-width="2" /><rect x="4" y="4" width="86" height="50" fill="none" stroke="#8aa9b2" /><path d="M11 10h74v38H11zM11 18h74M11 28h74M11 38h74M36 10v38M60 10v38" fill="none" stroke="#efefef" /><path d="M40 52h16M81 12h3" stroke="#9aa9b8" stroke-dasharray="1.500 1" /><path d="M11 22l35-2 39-3" stroke="#cf9ca6" fill="none" /></svg>
                      <div class="h-[18px] leading-[18px]">RMS Level</div>
                    </div>
                    <div class="w-[131px]">
                      <svg class="mx-auto" width="94" height="58"><rect x="1" y="1" width="92" height="56" fill="#fff" stroke="#94b0b8" stroke-width="3" /><rect x="4" y="4" width="86" height="50" fill="none" stroke="#8aa9b2" /><path d="M11 10h74v38H11zM11 21h74M11 32h74M29 10v38M45 10v38M68 10v38" fill="none" stroke="#efefef" /><path d="M40 52h16M81 12h3" stroke="#9aa9b8" stroke-dasharray="1.500 1" /><path d="M11 44l67-1 2-32" stroke="#dccfb4" fill="none" /><path d="M11 46h73l1-32" stroke="#dfbcbc" fill="none" /></svg>
                      <div class="h-[18px] leading-[18px] bg-[#94b0b8] text-[13px] text-white">THD+N Ratio vs...</div>
                    </div>
                  </div>
                  <div class="h-7 flex items-center pl-[3px] pr-[6px] text-[14px]">
                    <span>Data Sets</span><span class="mx-[6px] w-px h-4 bg-white"></span>
                    <input type="checkbox" checked aria-label="Check all" class="size-[14px] accent-[#335f8c]" />
                    <input type="checkbox" aria-label="Uncheck all" class="ml-[11px] appearance-none size-[14px] rounded-[2px] border-2 border-[#335f8c] bg-white" />
                    <span class="ml-[10px] mr-[5px] w-px h-4 bg-white"></span>
                    <button class="flex items-center gap-[2px]"><svg class="size-[18px]"><use href="#cleardata" /></svg>Clear Data<svg class="ml-1 size-2"><use href="#tri" /></svg></button>
                    <button class="ml-1 flex items-center gap-[2px]"><svg class="size-[18px]"><use href="#import" /></svg>Import</button>
                    <button class="ml-2 flex items-center gap-[2px]"><svg class="size-[18px]"><use href="#export" /></svg>Export</button>
                    <button class="ml-2 flex items-center gap-[2px]"><svg class="size-[18px] text-[#1d3c4a]"><use href="#gear" /></svg>Data Settings</button>
                    <svg class="ml-auto size-4"><use href="#up" /></svg>
                  </div>
                </div>
              </div>
            </main>
          </div>

          <footer class="h-6 flex items-center justify-end bg-[#f0f0f0] pr-[6px] text-[13px] [&_output]:bg-black [&_output]:text-center [&_output]:text-[#0bd80b] [&_output]:h-[19px] [&_output]:leading-[18px] [&_output]:px-[3px] [&_output]:text-[14px] whitespace-nowrap">
            <span class="pr-2">Output:</span><output>Analog Balanced 2 Ch, 40 ohm</output>
            <span class="pl-[7px] pr-2">Input 1:</span><output>Analog Balanced 2 Ch, 200 kohm</output><output class="ml-1">310.0 mVrms</output><output class="ml-1 min-w-[155px]">AC (&lt;10 Hz) - 22.4 kHz</output>
            <span class="pl-[7px] pr-2">Input 2:</span><output>None</output><svg class="ml-[6px] mt-2 size-3"><use href="#grip" /></svg>
          </footer>
        </div>
      </section>
    </div>

    <script>
      // ---- meters ----
      const meters = [
        { name: "RMS Level", unit: "W", active: true, ch: [["1.047", 76.8], ["1.019", 76.5]], line: 81.5 },
        { name: "Frequency", unit: "Hz", show: "kHz", ch: [["1.00000", 56.6], ["1.00000", 56.6]], line: 100 },
        { name: "SINAD", unit: "dB", ch: [["101.335", 84.3], ["101.033", 84.1]], line: 100 },
        { name: "THD+N Ratio", unit: "%", ch: [["0.000858", 15.7], ["0.000888", 16.1]], line: 100 },
      ];

      const bar = (pct, line) => `
        <div class="relative h-[19px] border border-[#b9b9b9] bg-[#808080]">
          <div class="h-full bg-[#00ff00]" style="width:${pct}%"></div>
          <div class="absolute left-0 top-[7px] h-1 bg-black" style="width:${line}%"></div>
        </div>`;
      const value = (v, u) => `
        <div class="h-[47px] pt-[2px] bg-black flex items-center justify-end gap-8 pr-[7px] text-[32px] leading-none text-[#14e61e]"><span>${v}</span><span>${u}</span></div>`;
      const channel = (n) => `
        <div class="flex-1 flex items-center justify-between pl-[5px] pr-[3px] text-[32px] leading-none font-light text-[#111]">Ch${n}<svg width="11" height="12"><path d="M0 0h11L5.500 12z" fill="#000" /></svg></div>`;

      document.getElementById("meters").innerHTML = meters.map((m, i) => `
        <div class="bg-[#d9e4e6] h-[173px] flex flex-col">
          <div class="h-7 flex items-center border-b border-[#a9a9a9] pl-[5px] pr-2 text-[13px]">
            <b class="pr-3 text-[16px] text-black whitespace-nowrap">${m.name}</b>
            ${m.active
              ? `<div class="relative w-[82px] h-[27px] bg-white border border-[#2f86d0]"><select aria-label="${m.name} unit" class="pl-[3px]"><option>${m.unit}</option></select><span class="absolute right-0 top-0 h-full w-3 bg-[#b7dcf5] border-l border-[#2f86d0] flex items-center justify-center pointer-events-none"><svg class="size-2"><use href="#tri" /></svg></span></div>`
              : `<div class="relative w-[82px] h-[27px] bg-white"><select aria-label="${m.name} unit" class="pl-1"><option>${m.unit}</option></select><svg class="absolute right-[3px] top-[10px] size-2 pointer-events-none"><use href="#tri" /></svg></div>`}
            <svg class="ml-1 size-[18px]"><use href="#trace" /></svg><svg class="size-2"><use href="#tri" /></svg>
            <svg class="ml-[6px] size-[18px] text-[#1d3c4a]"><use href="#gear" /></svg>
            <span class="ml-auto w-px h-4 bg-[#b7bfc1] mr-[7px]"></span>
            <button aria-label="Pop out"><svg class="size-4"><use href="#popout" /></svg></button>
            <button aria-label="Close meter" class="ml-[11px]"><svg class="size-[14px]"><use href="#close" /></svg></button>
          </div>
          <div class="flex-1 flex pt-1 pb-[5px] pl-[3px] pr-[9px]">
            <div class="w-[147px] shrink-0 flex flex-col">${channel(1)}<div class="h-px bg-[#a9a9a9]"></div>${channel(2)}</div>
            <div class="flex-1 min-w-0 flex flex-col justify-between">
              <div class="border-b border-black">${value(m.ch[0][0], m.show || m.unit)}${bar(m.ch[0][1], m.line)}</div>
              <div>${bar(m.ch[1][1], m.line)}${value(m.ch[1][0], m.show || m.unit)}</div>
            </div>
          </div>
        </div>`).join("");

      // ---- graph helpers ----
      function add(svg, tag, attrs, text) {
        const e = document.createElementNS("http://www.w3.org/2000/svg", tag);
        for (const k in attrs) e.setAttribute(k, attrs[k]);
        if (text !== undefined) e.textContent = text;
        svg.appendChild(e);
        return e;
      }
      const vline = (s, x, a, b, c) => add(s, "path", { d: `M${x} ${a}V${b}`, stroke: c });
      const hline = (s, y, a, b, c) => add(s, "path", { d: `M${a} ${y}H${b}`, stroke: c });
      const label = (s, x, y, t, anchor, size) => add(s, "text", { x, y, "text-anchor": anchor || "middle", "font-size": size || 12, fill: "#333" }, t);
      const title = (s, x, y, t) => add(s, "text", { x, y, "text-anchor": "middle", "font-size": 11, "font-family": "Liberation Mono, monospace", fill: "#000" }, t);
      const side = (s, x, y, t) => add(s, "text", { x: 0, y: 0, "text-anchor": "middle", "font-size": 13, fill: "#222", transform: `translate(${x} ${y}) rotate(-90)` }, t);
      const MAJOR = "#cdcdcd", MINOR = "#efefef";
      const frame = (s, x0, y0, x1, y1) => add(s, "rect", { x: x0, y: y0, width: x1 - x0, height: y1 - y0, fill: "none", stroke: "#777" });

      // ---- scope ----
      {
        const s = document.getElementById("scope");
        const x0 = 44.5, x1 = 559.5, y0 = 16.5, y1 = 197.5, mid = 107;
        for (let i = 1; i < 15; i++) vline(s, Math.round(x0 + i * 34.33) + 0.5, y0, y1, i % 2 ? MINOR : MAJOR);
        for (let v = -14; v <= 14; v += 2) {
          const y = Math.round(mid - v * 6.05) + 0.5;
          hline(s, y, x0, x1, v % 4 ? MINOR : MAJOR);
          if (v % 4 === 0) label(s, 40, y + 4, String(v), "end", 13);
        }
        frame(s, x0, y0, x1, y1);
        ["0", "400u", "800u", "1.2m", "1.6m", "2.0m", "2.4m", "2.8m"].forEach((t, i) => label(s, x0 + i * 68.7, 213, t));
        label(s, 301, 226, "Time (s)");
        title(s, 301, 12, "Scope");
        side(s, 14, 106, "Instantaneous Level (V)");
        let d = "";
        for (let i = 0; i <= 515; i++) d += `${i ? "L" : "M"}${x0 + i} ${(mid - 50 * Math.sin((i / 171.7) * 2 * Math.PI)).toFixed(2)}`;
        add(s, "path", { d, fill: "none", stroke: "#4a4a80", "stroke-width": 1, opacity: 0.6 });
        add(s, "path", { d, fill: "none", stroke: "#a03c4c", "stroke-width": 1 });
      }

      // ---- fft ----
      {
        const s = document.getElementById("fft");
        const x0 = 52.5, x1 = 560.5, y0 = 16.5, y1 = 202;
        const X = (f) => x0 + Math.log10(f / 20) * 169.4;
        const Y = (v) => y0 + (40 - v) * 0.9275;
        for (const dec of [10, 100, 1000, 10000])
          for (let k = 1; k < 10; k++) {
            const f = dec * k;
            if (f > 20 && f < 20000) vline(s, Math.round(X(f)) + 0.5, y0, y1, [1, 2, 3, 5].includes(k) ? MAJOR : MINOR);
          }
        for (let v = 40; v >= -160; v -= 20) {
          const y = Math.round(Y(v)) - 0.5;
          hline(s, y, x0, x1, v % 40 ? MINOR : MAJOR);
          if (v % 40 === 0) label(s, 48, y + 4, v > 0 ? "+" + v : String(v), "end", 13);
        }
        [[20, "20"], [30, "30"], [50, "50"], [100, "100"], [200, "200"], [300, "300"], [500, "500"], [1000, "1k"], [2000, "2k"], [3000, "3k"], [5000, "5k"], [10000, "10k"], [20000, "20k"]]
          .forEach(([f, t]) => label(s, X(f), 217, t));
        label(s, 305, 230, "Frequency (Hz)");
        title(s, 305, 12, "FFT");
        side(s, 14, 108, "Level (dBrA)");

        // wide arches at the bottom of the band, dense bins above it
        const noise = (seed, base, shift, color) => {
          const rnd = () => ((seed = (seed * 16807) % 2147483647) / 2147483647);
          let d = "", lobe = -1, floor = 0.02, top = 0;
          for (let f = 20; f < 20000; f += f < 180 ? 0.5 : 3) {
            let v;
            if (f < 180) {
              const p = (f + shift) / 8.5;
              if (Math.floor(p + 0.5) !== lobe) { lobe = Math.floor(p + 0.5); floor = 0.004 + rnd() * rnd() * 0.4; }
              if (Math.abs(Math.sin(p * Math.PI)) < 0.06) top = rnd() * 5;
              v = base + 2 + top + 10 * Math.log10(Math.sin(p * Math.PI) ** 2 + floor);
            } else {
              v = base - 2.5 * Math.log10(f / 20) + 10 * Math.log10(-Math.log(1 - rnd()) + 0.01);
            }
            v += 12 / (1 + Math.pow(Math.log10(f / 1000) / 0.025, 2));
            v = Math.max(-160, v);
            d += `${d ? "L" : "M"}${X(f).toFixed(1)} ${Y(v).toFixed(1)}`;
          }
          add(s, "path", { d, fill: "none", stroke: color, "stroke-width": 0.8, opacity: 0.85, "stroke-linejoin": "round" });
        };
        noise(4711, -144, 5, "#31549c");
        noise(1234, -140, 0, "#cc3a3e");
        const spike = (f, v, c, w) => add(s, "path", { d: `M${X(f).toFixed(1)} ${y1}V${Y(v)}`, stroke: c, "stroke-width": w || 1 });
        [[4000, -112], [6000, -119], [7000, -128], [8000, -127], [10100, -132], [13000, -134]].forEach(([f, v]) => spike(f * 0.993, v, "#31549c"));
        [[2000, -100], [3000, -107], [4000, -116], [5000, -128], [6000, -125], [7000, -126], [8000, -133], [9000, -127], [11000, -129], [13000, -132], [15000, -135]].forEach(([f, v]) => spike(f, v, "#c43238"));
        add(s, "path", { d: `M${X(1000) - 2} ${y1}L${X(1000)} ${Y(2)}L${X(1000) + 2} ${y1}z`, fill: "#a22a3a" });
        spike(1000, 2, "#a22a3a", 1.4);
        frame(s, x0, y0, x1, y1);
      }

      // ---- thd+n sweep ----
      {
        const s = document.getElementById("sweep");
        const x0 = 64.5, x1 = 1056.5, y0 = 36.5, y1 = 546.5;
        const X = (w) => x0 + Math.log10(w / 0.1) * 759.3;
        const Y = (v) => y0 - Math.log10(v) * 154.5;
        for (const dec of [1, 0.1, 0.01, 0.001])
          for (let k = 10; k > 1; k--) {
            const v = (dec * k) / 10;
            if (v < 0.00049) break;
            const y = Math.round(Y(v)) + 0.5;
            hline(s, y, x0, x1, [10, 5, 3, 2].includes(k) ? MAJOR : MINOR);
            if ([10, 5, 3, 2].includes(k)) label(s, 60, y + 4, String(+v.toPrecision(1)), "end", 13);
          }
        [[0.1, "100m"], [0.2, "200m"], [0.3, "300m"], [0.4, "400m"], [0.5, "500m"], [0.6, "600m"], [0.7, "700m"], [0.8, "800m"], [0.9, "0.9"], [1, "1"], [2, "2"]].forEach(([w, t]) => {
          vline(s, Math.round(X(w)) + 0.5, y0, y1, MAJOR);
          label(s, X(w), 562, t);
        });
        frame(s, x0, y0, x1, y1);
        label(s, 559, 576, "Measured Level (W)");
        title(s, 559, 12, "THD+N Ratio vs Measured Level");
        label(s, 1054, 30, "2025/10/22 16:58:19.368 - 2025/10/22 17:01:26.596", "end", 13);
        side(s, 15, 291, "THD+N Ratio (%)");

        const curve = (pts, stroke) => add(s, "polyline", { points: pts, fill: "none", stroke, "stroke-width": 1.1, opacity: 0.85 });
        curve("65,516 87,515 107,516 164,516 183,517 201,515 218,516 279,516 336,515 413,514 428,513 519,513 629,511 653,512 669,511 727,510 748,509 989,509 1026,508 1041,507 1048,315 1050,275 1056,95", "#3a559c");
        curve("65,492 97,496 111,497 134,497 173,499 189,502 211,502 230,504 248,503 267,504 287,503 322,507 344,507 360,506 378,510 401,508 418,508 471,512 491,511 511,513 564,512 601,514 622,513 640,514 657,514 680,515 707,513 748,512 790,512 825,511 848,509 864,507 922,506 943,504 985,502 1032,497 1041,315 1042,275 1050,103", "#cf4648");
        curve("65,482 91,480 115,480 132,479 189,479 201,478 271,478 299,477 356,477 389,475 430,474 446,473 483,472 495,473 544,473 577,472 629,470 632,469 649,470 694,470 707,469 950,469 969,358 971,315 973,275 985,53", "#2f8f45");
        curve("65,486 95,485 111,483 132,483 160,482 183,484 201,481 222,482 242,481 299,481 316,480 356,480 397,478 430,478 446,477 483,476 560,476 601,474 629,473 632,472 765,472 781,471 951,471 968,470 974,315 976,275 984,57", "#df6c34");
        add(s, "use", { href: "#ap", x: 1018, y: 43, width: 30, height: 30 });
      }
    </script>
  </body>
</html>
